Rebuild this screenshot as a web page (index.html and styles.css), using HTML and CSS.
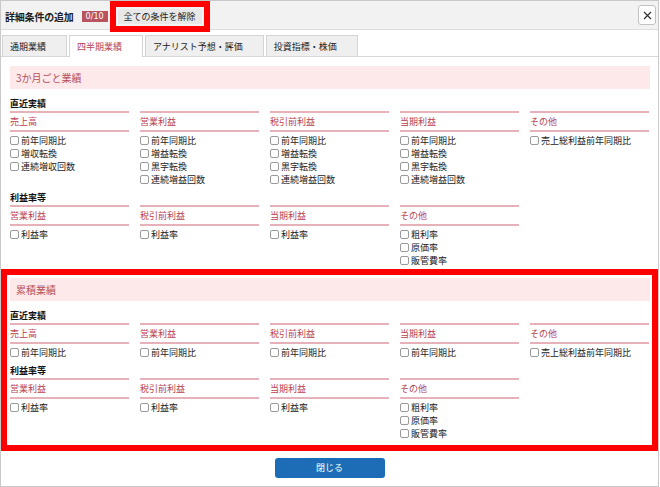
FILE: index.html
```html
<!DOCTYPE html>
<html lang="ja">
<head>
<meta charset="utf-8">
<title>詳細条件の追加</title>
<link rel="stylesheet" href="styles.css">
</head>
<body>
<div class="modal">
  <div class="modal-header">
    <h1 class="modal-title">詳細条件の追加</h1>
    <span class="count-badge">0/10</span>
    <button class="clear-btn mark">全ての条件を解除</button>
    <button class="close-btn" aria-label="閉じる"><svg width="9" height="9" viewBox="0 0 9 9"><path d="M1 1 L8 8 M8 1 L1 8" stroke="#333" stroke-width="1.2" fill="none"/></svg></button>
  </div>

  <div class="tabs">
    <div class="tab">通期業績</div>
    <div class="tab active">四半期業績</div>
    <div class="tab">アナリスト予想・評価</div>
    <div class="tab">投資指標・株価</div>
  </div>

  <div class="tab-content">
    <section class="cond-section">
      <div class="section-title">3か月ごと業績</div>
      <div class="cond-label">直近実績</div>
      <div class="cond-grid">
        <div class="cond-col">
          <div class="cond-head">売上高</div>
          <ul class="cond-list">
            <li><label><input type="checkbox">前年同期比</label></li>
            <li><label><input type="checkbox">増収転換</label></li>
            <li><label><input type="checkbox">連続増収回数</label></li>
          </ul>
        </div>
        <div class="cond-col">
          <div class="cond-head">営業利益</div>
          <ul class="cond-list">
            <li><label><input type="checkbox">前年同期比</label></li>
            <li><label><input type="checkbox">増益転換</label></li>
            <li><label><input type="checkbox">黒字転換</label></li>
            <li><label><input type="checkbox">連続増益回数</label></li>
          </ul>
        </div>
        <div class="cond-col">
          <div class="cond-head">税引前利益</div>
          <ul class="cond-list">
            <li><label><input type="checkbox">前年同期比</label></li>
            <li><label><input type="checkbox">増益転換</label></li>
            <li><label><input type="checkbox">黒字転換</label></li>
            <li><label><input type="checkbox">連続増益回数</label></li>
          </ul>
        </div>
        <div class="cond-col">
          <div class="cond-head">当期利益</div>
          <ul class="cond-list">
            <li><label><input type="checkbox">前年同期比</label></li>
            <li><label><input type="checkbox">増益転換</label></li>
            <li><label><input type="checkbox">黒字転換</label></li>
            <li><label><input type="checkbox">連続増益回数</label></li>
          </ul>
        </div>
        <div class="cond-col">
          <div class="cond-head">その他</div>
          <ul class="cond-list">
            <li><label><input type="checkbox">売上総利益前年同期比</label></li>
          </ul>
        </div>
      </div>

      <div class="cond-label next">利益率等</div>
      <div class="cond-grid">
        <div class="cond-col">
          <div class="cond-head">営業利益</div>
          <ul class="cond-list">
            <li><label><input type="checkbox">利益率</label></li>
          </ul>
        </div>
        <div class="cond-col">
          <div class="cond-head">税引前利益</div>
          <ul class="cond-list">
            <li><label><input type="checkbox">利益率</label></li>
          </ul>
        </div>
        <div class="cond-col">
          <div class="cond-head">当期利益</div>
          <ul class="cond-list">
            <li><label><input type="checkbox">利益率</label></li>
          </ul>
        </div>
        <div class="cond-col">
          <div class="cond-head">その他</div>
          <ul class="cond-list">
            <li><label><input type="checkbox">粗利率</label></li>
            <li><label><input type="checkbox">原価率</label></li>
            <li><label><input type="checkbox">販管費率</label></li>
          </ul>
        </div>
      </div>
    </section>

    <section class="cond-section highlighted">
      <div class="section-title">累積業績</div>
      <div class="cond-label">直近実績</div>
      <div class="cond-grid">
        <div class="cond-col">
          <div class="cond-head">売上高</div>
          <ul class="cond-list">
            <li><label><input type="checkbox">前年同期比</label></li>
          </ul>
        </div>
        <div class="cond-col">
          <div class="cond-head">営業利益</div>
          <ul class="cond-list">
            <li><label><input type="checkbox">前年同期比</label></li>
          </ul>
        </div>
        <div class="cond-col">
          <div class="cond-head">税引前利益</div>
          <ul class="cond-list">
            <li><label><input type="checkbox">前年同期比</label></li>
          </ul>
        </div>
        <div class="cond-col">
          <div class="cond-head">当期利益</div>
          <ul class="cond-list">
            <li><label><input type="checkbox">前年同期比</label></li>
          </ul>
        </div>
        <div class="cond-col">
          <div class="cond-head">その他</div>
          <ul class="cond-list">
            <li><label><input type="checkbox">売上総利益前年同期比</label></li>
          </ul>
        </div>
      </div>

      <div class="cond-label next">利益率等</div>
      <div class="cond-grid">
        <div class="cond-col">
          <div class="cond-head">営業利益</div>
          <ul class="cond-list">
            <li><label><input type="checkbox">利益率</label></li>
          </ul>
        </div>
        <div class="cond-col">
          <div class="cond-head">税引前利益</div>
          <ul class="cond-list">
            <li><label><input type="checkbox">利益率</label></li>
          </ul>
        </div>
        <div class="cond-col">
          <div class="cond-head">当期利益</div>
          <ul class="cond-list">
            <li><label><input type="checkbox">利益率</label></li>
          </ul>
        </div>
        <div class="cond-col">
          <div class="cond-head">その他</div>
          <ul class="cond-list">
            <li><label><input type="checkbox">粗利率</label></li>
            <li><label><input type="checkbox">原価率</label></li>
            <li><label><input type="checkbox">販管費率</label></li>
          </ul>
        </div>
      </div>
    </section>
  </div>

  <div class="modal-footer">
    <button class="primary-btn">閉じる</button>
  </div>
</div>
</body>
</html>
```

FILE: styles.css
```css
* {
  box-sizing: border-box;
}

html, body {
  margin: 0;
  padding: 0;
  background: #ffffff;
}

body {
  font-family: "Noto Sans CJK JP", "Noto Sans", sans-serif;
  font-size: 9px;
  color: #333333;
}

button {
  font-family: inherit;
  cursor: pointer;
}

.modal {
  width: 659px;
  height: 487px;
  border: 1px solid #c9c9c9;
  background: #ffffff;
  display: flex;
  flex-direction: column;
}

/* header */
.modal-header {
  height: 29px;
  padding: 3px 2px 0 4px;
  background: #f2f2f2;
  border-bottom: 1px solid #dedede;
  display: flex;
  align-items: center;
}

.modal-title {
  margin: 0;
  font-size: 10px;
  font-weight: bold;
  color: #1e1e1e;
  line-height: 14px;
  letter-spacing: -0.2px;
}

.count-badge {
  margin-left: 8px;
  height: 11px;
  padding: 0 4px;
  background: #b9545f;
  color: #ffffff;
  font-family: "DejaVu Sans", sans-serif;
  font-size: 8px;
  line-height: 11px;
}

.clear-btn {
  margin-left: 10px;
  height: 15px;
  padding: 0 6px;
  border: none;
  background: #e8e8e8;
  color: #222222;
  font-size: 9px;
  line-height: 15px;
}

.mark {
  outline: 6px solid #ff0000;
  outline-offset: 2px;
}

.close-btn {
  margin-left: auto;
  margin-top: -3px;
  width: 18px;
  height: 20px;
  padding: 0;
  border: 1px solid #c2c2c2;
  border-radius: 3px;
  background: #ffffff;
  display: flex;
  align-items: center;
  justify-content: center;
}

.close-btn svg {
  display: block;
}

/* tabs */
.tabs {
  padding: 5px 0 0 1px;
  display: flex;
  border-bottom: 1px solid #d8d8d8;
}

.tab {
  height: 21px;
  margin-right: 2px;
  margin-bottom: -1px;
  padding: 0 20px 0 7px;
  border: 1px solid #d4d4d4;
  border-bottom: none;
  background: #efefef;
  color: #222222;
  font-size: 9px;
  line-height: 21px;
  white-space: nowrap;
}

.tab.active {
  height: 22px;
  background: #ffffff;
  color: #b84556;
}

/* content */
.tab-content {
  padding: 9px 8px 0 9px;
}

.cond-section.highlighted {
  margin: 8px -2px 0 -3px;
  padding: 3px 2px 5px 3px;
  outline: 6px solid #ff0000;
}

.section-title {
  height: 23px;
  padding-left: 6px;
  background: #fde8ea;
  color: #b5505d;
  font-size: 10px;
  line-height: 23px;
}

.cond-label {
  margin-top: 8px;
  margin-bottom: 1px;
  font-size: 9px;
  font-weight: bold;
  color: #111111;
  line-height: 13px;
}

.cond-label.next {
  margin-top: 5px;
}

.cond-grid {
  display: grid;
  grid-template-columns: repeat(5, 119px);
  column-gap: 11px;
}

.cond-head {
  height: 21px;
  border-top: 2px solid #e6b1b8;
  border-bottom: 2px solid #e6b1b8;
  color: #b93f52;
  font-size: 9px;
  line-height: 17px;
}

.cond-list {
  list-style: none;
  margin: 0;
  padding: 2px 0 0 0;
}

.cond-list li {
  height: 13px;
  line-height: 13px;
}

.cond-list label {
  display: flex;
  align-items: center;
  white-space: nowrap;
  color: #222222;
}

.cond-list input {
  -webkit-appearance: none;
  appearance: none;
  width: 9px;
  height: 9px;
  margin: 0 2px 0 0;
  border: 1px solid #9a9a9a;
  border-radius: 2px;
  background: #ffffff;
  flex: none;
}

/* footer */
.modal-footer {
  margin-top: 13px;
  display: flex;
  justify-content: center;
}

.primary-btn {
  width: 110px;
  height: 20px;
  padding: 0;
  border: none;
  border-radius: 3px;
  background: #1c6db5;
  color: #ffffff;
  font-size: 9px;
  line-height: 20px;
}
```
